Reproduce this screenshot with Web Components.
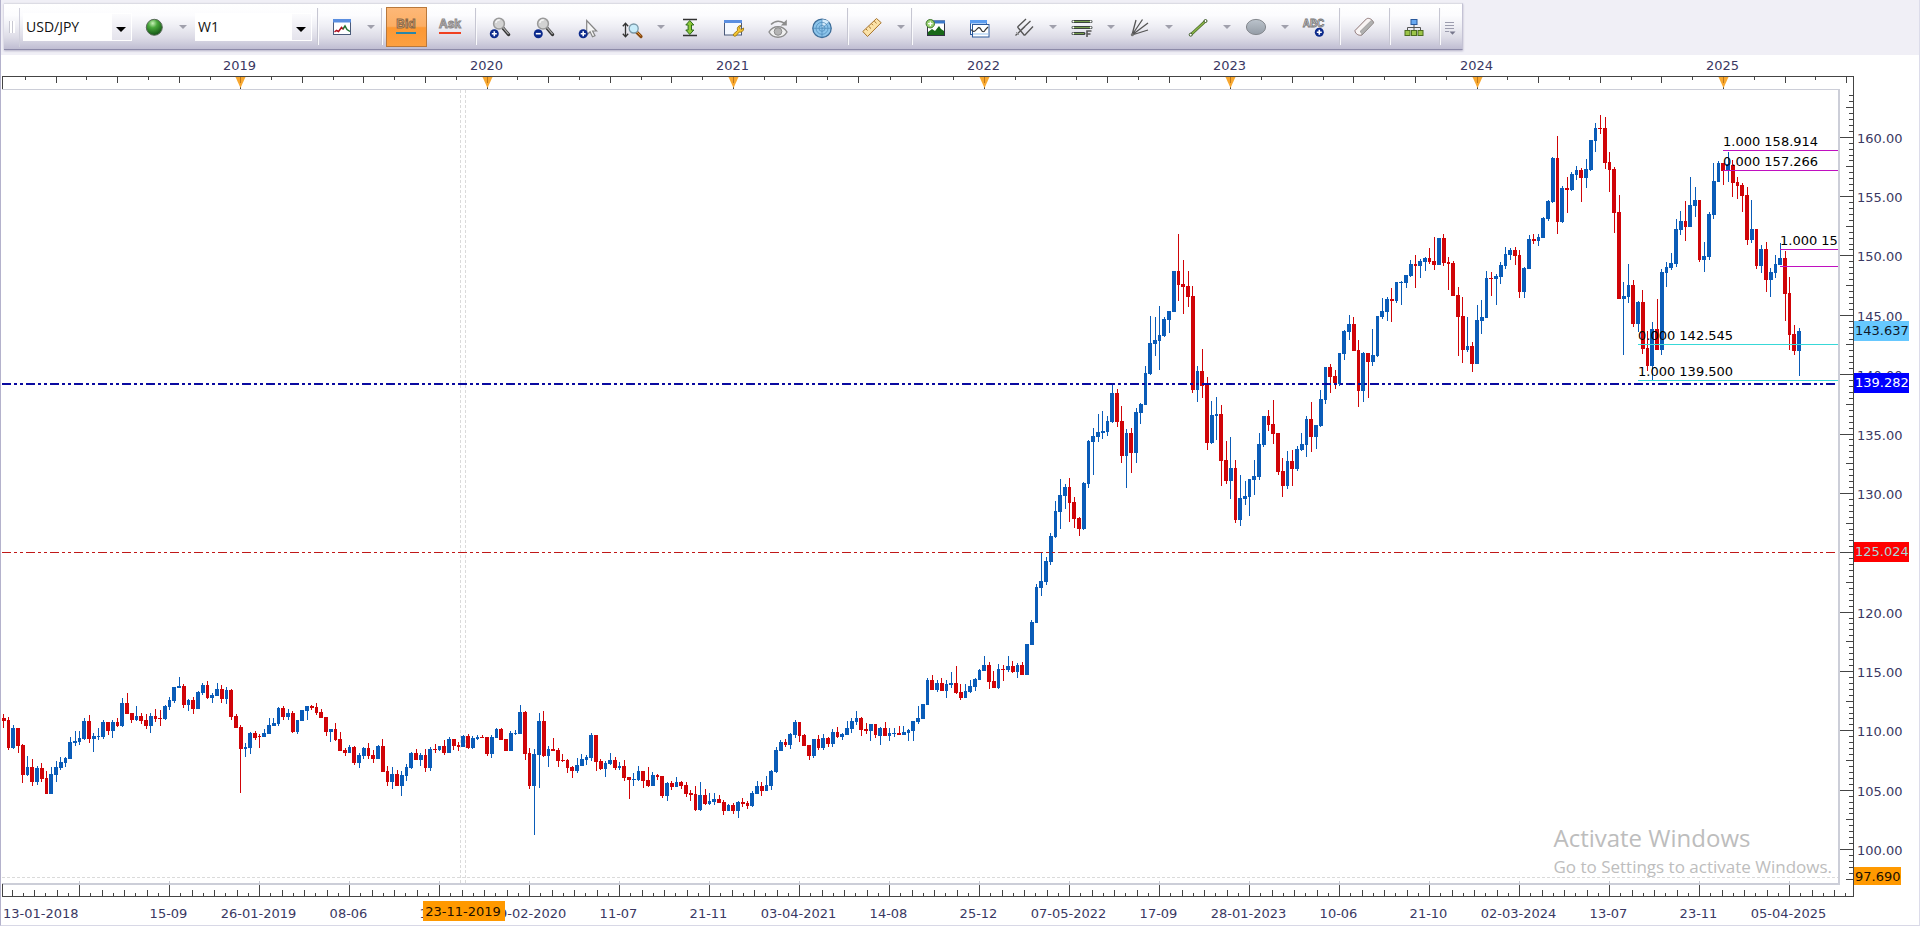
<!DOCTYPE html>
<html lang="en">
<head>
<meta charset="utf-8">
<title>USD/JPY W1</title>
<style>
	html, body {
		margin: 0;
		height: 100%;
	}
	body {
		font-family: "DejaVu Sans", Verdana, sans-serif;
		font-size: 13px;
		color: #3a3862;
		background: #fff;
	}
</style>
</head>
<body>
<trading-app>
	<tool-bar slot="toolbar">
		<tool-select label="Instrument" options="USD/JPY"></tool-select>
		<tool-button icon="orb" label="Connection" menu></tool-button>
		<tool-select label="Period" size="wider" options="W1"></tool-select>
		<tool-separator></tool-separator>
		<tool-button icon="chart" label="Chart type" menu></tool-button>
		<tool-separator></tool-separator>
		<price-side colour="#2a86a8" pressed>Bid</price-side>
		<price-side colour="#f04020">Ask</price-side>
		<tool-separator></tool-separator>
		<tool-button icon="zoomIn" label="Zoom in"></tool-button>
		<tool-button icon="zoomOut" label="Zoom out"></tool-button>
		<tool-button icon="pointer" label="Add pointer"></tool-button>
		<tool-button icon="zoomScale" label="Zoom scale" menu></tool-button>
		<tool-button icon="fit" label="Fit height"></tool-button>
		<tool-button icon="settings" label="Settings"></tool-button>
		<tool-button icon="eye" label="Show or hide"></tool-button>
		<tool-button icon="radar" label="Scan"></tool-button>
		<tool-separator></tool-separator>
		<tool-button icon="ruler" label="Measure" menu></tool-button>
		<tool-separator></tool-separator>
		<tool-button icon="indicator" label="Add indicator"></tool-button>
		<tool-button icon="windows" label="Chart windows"></tool-button>
		<tool-button icon="pitchfork" label="Pitchfork" menu></tool-button>
		<tool-button icon="levels" label="Fibonacci" menu></tool-button>
		<tool-button icon="fan" label="Fan" menu></tool-button>
		<tool-button icon="line" label="Line" menu></tool-button>
		<tool-button icon="ellipse" label="Shape" menu></tool-button>
		<tool-button icon="text" label="Add text"></tool-button>
		<tool-separator></tool-separator>
		<tool-button icon="eraser" label="Erase"></tool-button>
		<tool-separator></tool-separator>
		<tool-button icon="tree" label="Objects"></tool-button>
		<tool-separator></tool-separator>
		<tool-button icon="overflow" label="More" size="small"></tool-button>
	</tool-bar>
	<price-chart>
		<year-ruler slot="top"></year-ruler>
		<candle-plot slot="plot">
			<system-notice heading="Activate Windows">Go to Settings to activate Windows.</system-notice>
		</candle-plot>
		<price-ruler slot="right"></price-ruler>
		<date-ruler slot="bottom"></date-ruler>
	</price-chart>
</trading-app>

<script>
const BADGE = (x, y, minus) => `
	<circle cx="${x}" cy="${y}" r="4.5" fill="#0c2a8c"/>
	<path d="M${x - 2.5} ${y}h5${minus ? "" : `M${x} ${y - 2.5}v5`}" stroke="#fff" stroke-width="1.6"/>`;

const LENS = `
	<path d="M12.5 10.5l6 7" stroke="#333" stroke-width="3.4" stroke-linecap="round"/>
	<path d="M13 10.5l5.6 6.6" stroke="#aaa" stroke-width="1.2"/>
	<circle cx="9" cy="6.7" r="5.4" fill="#d2d2d2" stroke="#9a9a9a" stroke-width="1.5"/>
	<path d="M5.8 6a3.6 3.6 0 0 1 4-3" fill="none" stroke="#f4f4f4" stroke-width="1.4"/>`;

const ICONS = {
	orb: `
		<defs><radialGradient id="g" cx=".4" cy=".25" r=".8">
			<stop offset="0" stop-color="#c8f0b8"/><stop offset=".35" stop-color="#4aa83c"/><stop offset="1" stop-color="#0c4a10"/>
		</radialGradient></defs>
		<circle cx="10.3" cy="10.3" r="8" fill="url(#g)" stroke="#5a6a5a"/>`,
	chart: `
		<rect x="1.5" y="2.5" width="17" height="15" fill="#fff" stroke="#4a5a7a"/>
		<path d="M1 2h18v3.5H1z" fill="#5a8ee0"/>
		<path d="M2.5 15l2-1.5 2 1 3-4 2 2" fill="none" stroke="#b01020" stroke-width="1.5"/>
		<path d="M11 12l2-3 2 3.5 3 2" fill="none" stroke="#207030" stroke-width="1.5"/>`,
	zoomIn: LENS + BADGE(4.3, 16.7),
	zoomOut: LENS + BADGE(4.3, 16.7, true),
	pointer: `
		<path d="M8.7 3.5v14.5l3.4-3.200 2.4 5 2.500-1.100-2.400-4.700h4z" fill="#f6f6f6" stroke="#858585" stroke-width="1.200"/>
		${BADGE(5.2, 16.7)}`,
	zoomScale: `
		<path d="M3.5 6.5v13M.8 9.2l2.7-3 2.7 3M.8 16.8l2.7 3 2.7-3" fill="none" stroke="#333" stroke-width="1.3"/>
		<path d="M14.5 15l4.5 4.5" stroke="#8a4a10" stroke-width="3.2" stroke-linecap="round"/>
		<path d="M15 15l3.6 3.6" stroke="#e8a040"/>
		<circle cx="11.7" cy="11.5" r="4.5" fill="#c8ecfa" stroke="#7a98a8" stroke-width="1.3"/>`,
	fit: `
		<path d="M3 2.5h14M3 18.5h14" stroke="#333" stroke-width="1.5"/>
		<path d="M9.8 3.5l4 4.5h-2.3v5h2.3l-4 4.5-4-4.5h2.3V8H5.8z" fill="#8cc838" stroke="#2c6a18"/>`,
	settings: `
		<rect x=".5" y="3.5" width="17" height="14.5" fill="#f4f8ff" stroke="#4a5a7a"/>
		<path d="M0 3h18v3H0z" fill="#5a8ee0"/>
		<path d="M9.5 17l4-3.500c-.8-3 1-5.200 3.500-5l-1.500 2.500 1.500 1.500 2.500-1.500c.6 2.800-2 4.800-4.200 4l-3.500 4c-1.500.8-3-.3-2.300-2z" fill="#f4c430" stroke="#9a7410" stroke-width=".9"/>`,
	eye: `
		<path d="M1 15c4-7 14-7 18 0-4 7-14 7-18 0z" fill="#f0f0f0" stroke="#8c8c8c" stroke-width="1.4"/>
		<circle cx="10" cy="14.5" r="3.8" fill="#b4b4b4" stroke="#8c8c8c"/>
		<path d="M3 7.500c4-4 9-4 13.500-1.200" fill="none" stroke="#8c8c8c" stroke-width="1.6"/>
		<path d="M18.8 2.5v6h-6z" fill="#8c8c8c"/>`,
	radar: `
		<circle cx="10" cy="11.3" r="9.2" fill="#8cc4ea" stroke="#3c6c98" stroke-width="1.3"/>
		<path d="M10 11.3L17.5 5A9 9 0 0 0 10 2.500z" fill="#d4ecfc"/>
		<g fill="none" stroke="#4c88b8" stroke-width=".7">
			<circle cx="10" cy="11.3" r="6"/><circle cx="10" cy="11.3" r="3"/>
			<path d="M10 2v18.5M1 11.3h18M10 11.3L17 5"/>
		</g>`,
	ruler: `
		<path d="M.8 14.5L14.5 1.500l4.700 4.200L5.500 19.500z" fill="#fbe2a8" stroke="#a8742c"/>
		<path d="M4 12l1.500 1.500M6.700 9.300l2.300 2.300M9.500 6.700L11 8.200M12.200 4l2.300 2.300" stroke="#a8742c"/>`,
	indicator: `
		<rect x="1.5" y="4" width="17" height="14.5" fill="#fff" stroke="#334"/>
		<path d="M1 3.5h18v3H1z" fill="#3c78c8"/>
		<path d="M2 18v-3l4-3 3 2 4-5 2 3 3 2v4z" fill="#186818"/>
		<circle cx="4.3" cy="6.7" r="4.2" fill="#98d070" stroke="#407830"/>
		<path d="M2 6.7h4.6M4.3 4.4V9" stroke="#fff" stroke-width="1.3"/>`,
	windows: `
		<rect x=".5" y="3.5" width="16" height="14" fill="#fff" stroke="#2c5a9c"/>
		<path d="M0 3h17v3.5H0z" fill="#5a9cf0"/>
		<rect x="2.5" y="7.5" width="16.500" height="12.500" fill="#fff" stroke="#2c5a9c"/>
		<path d="M1 12.500c2 3 4 2 5.500 0s3-3 4.500 0 3 3 4.500 0l2.500-2.500" fill="none" stroke="#333" stroke-width="1.2"/>
		<path d="M3 17h15.500" stroke="#9ac4f0"/>`,
	pitchfork: `
		<path d="M1.5 18.5L11 9.500M3.500 10l8.500-8M3.500 10l7 8.500M7 13l9.500-9M10.500 18.500L19 9.500" fill="none" stroke="#555" stroke-width="1.3"/>
		<path d="M2 15l3 3" stroke="#999"/>`,
	levels: `
		<path d="M1 4.500h18M1 10.500h18M1 16.500h11" stroke="#3c4440" stroke-width="3" stroke-linecap="round"/>
		<path d="M2 4.500h16M2 10.500h16M2 16.500h10" stroke="#78a050"/>
		<g fill="#fff"><circle cx="1.300" cy="4.500" r=".9"/><circle cx="18.700" cy="4.500" r=".9"/><circle cx="1.300" cy="10.500" r=".9"/><circle cx="18.700" cy="10.500" r=".9"/><circle cx="1.300" cy="16.500" r=".9"/></g>
		<path d="M15 20v-6h4.500M15 17h3.500" fill="none" stroke="#555" stroke-width="1.600"/>`,
	fan: `
		<path d="M2 18L6 3M2 18L12.500 2.500M2 18L18 6M2 18l16-5" fill="none" stroke="#555" stroke-width="1.3"/>
		<circle cx="2.3" cy="17.7" r="1.5" fill="#777"/>`,
	line: `
		<path d="M3 17.5L17.500 4" stroke="#4c6a2c" stroke-width="3"/>
		<path d="M3 17.5L17.500 4" stroke="#8cb848" stroke-width="1.4"/>
		<circle cx="2.7" cy="17.7" r="1.5" fill="#fff" stroke="#3c5a24"/><circle cx="17.500" cy="4" r="1.500" fill="#fff" stroke="#3c5a24"/>`,
	ellipse: `
		<defs><linearGradient id="g" x2="0" y2="1"><stop offset="0" stop-color="#bcc4cc"/><stop offset="1" stop-color="#949ca6"/></linearGradient></defs>
		<ellipse cx="10" cy="10" rx="9.6" ry="7.600" fill="url(#g)" stroke="#84888e"/>`,
	text: `
		<text x="9.5" y="9.500" text-anchor="middle" font-family="Liberation Sans, Arial, sans-serif" font-size="10" font-weight="bold" fill="#e4e4ea" stroke="#777" stroke-width=".8">ABC</text>
		${BADGE(15.3, 15.3)}`,
	eraser: `
		<path d="M1 13.500L12.500 1.800c2.500-1.500 6.500 1 7 4L8 18c-3 1-7-1-7-4.500z" fill="#f8f4f4" stroke="#8c7474"/>
		<path d="M8 18c0-1.500-.7-2.500-2-3.500L17.500 3.200c1.500 1 2 2 2 2.800z" fill="#b0b0b0" stroke="#888" stroke-width=".6"/>`,
	tree: `
		<path d="M10 7v6M3.500 14v-3.500h13V14" fill="none" stroke="#555"/>
		<rect x="7" y="2.500" width="6" height="5" fill="#68a8f0" stroke="#28589c"/>
		<g fill="#9cc448" stroke="#4c6c20"><rect x="1" y="13.500" width="5" height="5"/><rect x="7.500" y="13.500" width="5" height="5"/><rect x="14" y="13.500" width="5" height="5"/></g>`,
	overflow: `
		<path d="M5 5.500h9M5 8.500h9M5 11.500h9M5 14.500h4" stroke="#9c9cae"/>
		<path d="M9.500 14.500h6l-3 3.200z" fill="#77778c"/>`
};

// page frame: the tool strip on top, the chart takes what is left
class TradingApp extends HTMLElement {
	constructor() {
		super();
		this.attachShadow({mode: "open"}).innerHTML = `
			<style>
				:host {
					display: flex;
					flex-direction: column;
					box-sizing: border-box;
					height: calc(100vh - 1px);
					border-left: 1px solid #b4b2cc;
					border-right: 1px solid #dcdcea;
					border-bottom: 1px solid #d8d8e6;
				}
				header {
					background: #f0eff6;
					padding: 3px 3px 5px;
				}
				::slotted(price-chart) { flex: 1; }
			</style>
			<header><slot name="toolbar"></slot></header>
			<slot></slot>
		`;
	}
}

class ToolBar extends HTMLElement {
	constructor() {
		super();
		this.attachShadow({mode: "open"}).innerHTML = `
			<style>
				:host {
					display: inline-flex;
					vertical-align: top;
					align-items: center;
					box-sizing: border-box;
					height: 47px;
					border-top: 1px solid #dcdce4;
					border-bottom: 1px solid #8c8aa8;
					border-right: 1px solid #c4c2d4;
					background: linear-gradient(#fff 0, #fcfcfe 25%, #eeeef4 50%, #dcdbe6 75%, #bfbdd2 100%);
					box-shadow: 0 1px 2px #b4b2c8;
				}
				.grip {
					width: 6px;
					height: 12px;
					margin: 0 3px 0 5px;
					background: repeating-linear-gradient(90deg, #c8c8d2 0 1px, #fff 1px 3px);
				}
				.edge {
					align-self: stretch;
					margin: 4px 3px 2px 1px;
					border-left: 1px solid #d0d0dc;
				}
			</style>
			<span class="grip"></span>
			<span class="edge"></span>
			<slot></slot>
		`;
	}
}

class ToolSeparator extends HTMLElement {
	constructor() {
		super();
		this.attachShadow({mode: "open"}).innerHTML = `
			<style>
				:host {
					align-self: stretch;
					box-sizing: border-box;
					width: 2px;
					margin: 4px 1px 4px 3px;
					border-left: 1px solid #c6c6d2;
					border-right: 1px solid #fafafc;
				}
			</style>
		`;
	}
}

class ToolSelect extends HTMLElement {
	connectedCallback() {
		let options = this.getAttribute("options").split(",");
		this.attachShadow({mode: "open"}).innerHTML = `
			<style>
				:host {
					display: block;
					position: relative;
					width: 109px;
				}
				:host([size="wider"]) {
					width: 117px;
					margin: 0 2px 0 5px;
				}
				select {
					appearance: none;
					display: block;
					width: 100%;
					height: 28px;
					padding: 0 20px 0 3px;
					border: 0;
					font: 14px "Open Sans", "Noto Sans", sans-serif;
					color: #111;
					background: linear-gradient(#fbfbfd, #e4e3ec) right 1px top 1px / 19px 26px no-repeat, #fff;
				}
				:host::after {
					content: "";
					position: absolute;
					right: 6px;
					top: 14px;
					border: 5px solid transparent;
					border-top-color: #000;
					border-bottom: 0;
					pointer-events: none;
				}
			</style>
			<select aria-label="${this.getAttribute("label")}">
				${options.map(option => `<option>${option}</option>`).join("")}
			</select>
		`;
	}
}

class ToolButton extends HTMLElement {
	connectedCallback() {
		let label = this.getAttribute("label");
		let menu = this.hasAttribute("menu") ? `<button class="menu" aria-label="${label} menu"></button>` : "";
		this.attachShadow({mode: "open"}).innerHTML = `
			<style>
				:host { display: flex; }
				button {
					display: flex;
					align-items: center;
					justify-content: center;
					width: 44px;
					height: 38px;
					padding: 0;
					border: 0;
					background: none;
				}
				:host([size="small"]) button { width: 20px; }
				:host([size="small"]) svg { flex-shrink: 0; margin-right: 4px; }
				button:hover { background: #fff8; }
				svg { overflow: visible; }
				.menu { width: 14px; }
				.menu::after {
					content: "";
					border: 4px solid transparent;
					border-top-color: #a0a0ac;
					border-bottom: 0;
				}
			</style>
			<button aria-label="${label}"><svg width="20" height="20" viewBox="0 0 20 20">${ICONS[this.getAttribute("icon")]}</svg></button>${menu}
		`;
	}
}

// Bid / Ask toggle
class PriceSide extends HTMLElement {
	connectedCallback() {
		let pressed = this.hasAttribute("pressed");
		this.attachShadow({mode: "open"}).innerHTML = `
			<style>
				:host {
					display: block;
					width: 44px;
				}
				button {
					display: flex;
					align-items: center;
					justify-content: center;
					width: 41px;
					height: 40px;
					margin: 0 auto;
					padding: 0 0 2px;
					border: 1px solid transparent;
					background: none;
				}
				button[aria-pressed="true"] {
					border-color: #b8783c;
					background: linear-gradient(#fdb878 0, #fcae64 48%, #fc9834 52%, #fda040 100%);
				}
				span {
					font: bold 12px/15px "Liberation Sans", Arial, sans-serif;
					color: #dcdce2;
					-webkit-text-stroke: 1px #8c8888;
					border-bottom: 2px solid ${this.getAttribute("colour")};
				}
				[aria-pressed="true"] span {
					color: #f0b880;
					-webkit-text-stroke-color: #8a6848;
				}
			</style>
			<button aria-pressed="${pressed}"><span><slot></slot></span></button>
		`;
	}
}

class PriceChart extends HTMLElement {
	constructor() {
		super();
		this.attachShadow({mode: "open"}).innerHTML = `
			<style>
				:host {
					display: grid;
					grid-template: 34px minmax(0, 1fr) 40px / minmax(0, 1fr) 79px;
					min-height: 0;
					padding-left: 1px;
				}
				slot[name="top"]::slotted(*), slot[name="bottom"]::slotted(*) { grid-column: 1 / 3; }
			</style>
			<slot name="top"></slot>
			<slot name="plot"></slot>
			<slot name="right"></slot>
			<slot name="bottom"></slot>
		`;
	}
}

// Weekly candles, first week 13-01-2018. u/d = up or down, then high, body top,
// body bottom and low. Levels count down from TOP_PRICE, LEVELS_PER_YEN to one yen.
const CANDLES = `
d714 718 721 728,d717 720 748 750,u725 728 748 749,d728 728 746 753,d744 745 775 783,u756 767 775 776,d759 767 782 786,u766 768 782 785,d763 768 779 782,d771 778 794 794,
u767 774 794 794,u761 767 775 782,u757 762 768 770,u757 758 763 767,u737 742 759 759,u731 741 743 746,u731 738 742 745,u718 721 739 740,d715 721 739 743,u733 736 739 752,
u728 736 737 740,u720 722 737 739,d722 722 731 735,u720 722 731 738,d718 722 726 727,u698 703 726 727,d693 703 714 714,d713 713 720 723,u706 716 720 721,d713 716 721 724,
d714 720 726 729,u713 716 726 733,d709 716 719 722,d710 718 719 726,u705 706 719 720,u697 700 707 710,u687 687 701 703,u677 686 688 688,d684 686 705 708,u699 700 705 711,
d697 700 709 714,u691 692 709 709,u683 685 693 695,d681 685 698 699,u693 695 698 703,u683 689 696 696,d685 689 699 703,u687 690 699 704,d689 690 717 720,d714 716 728 728,
d725 727 749 793,u743 747 749 757,u732 733 748 754,d731 733 738 740,d734 736 737 748,u729 733 737 737,u718 725 734 734,u718 723 726 726,u707 708 724 726,d706 708 717 720,
u709 713 717 720,d711 713 732 733,u720 720 732 734,u710 710 721 721,u706 706 711 720,d705 706 708 710,d703 707 713 715,d709 712 718 718,d717 717 732 736,u729 729 732 742,
d723 729 740 741,d732 739 751 751,d748 750 753 756,u745 747 753 753,d746 747 763 765,u753 755 763 768,u747 748 756 759,d743 748 756 759,d750 755 759 763,u745 746 759 759,
d739 746 772 772,d766 771 782 786,u767 774 782 789,d770 774 786 786,u771 775 786 796,u764 767 776 781,u752 753 768 769,d749 753 760 760,u753 755 760 766,d749 755 768 772,
u747 749 768 771,d744 749 750 753,u746 746 750 751,d740 746 753 755,u737 739 753 753,d739 739 746 750,d742 745 747 751,u735 736 747 747,d734 736 748 749,u736 738 748 749,
u735 737 739 740,d735 737 738 738,d737 737 754 756,u735 737 754 758,u728 729 738 738,d728 729 740 740,d739 739 751 751,u731 733 751 751,u730 733 734 735,u705 712 734 734,
d711 712 754 760,d748 753 786 789,u749 754 786 835,u713 721 755 788,d711 721 756 757,u746 749 756 767,d738 749 751 751,d748 750 761 767,d754 760 761 762,d759 760 768 773,
d766 767 771 778,u758 765 771 773,u754 759 766 766,u755 757 760 765,u733 735 758 761,d735 735 762 771,d759 761 769 770,u761 763 769 777,u753 760 764 765,d757 760 768 770,
u762 766 768 770,d760 766 778 781,d777 777 780 799,u773 779 780 786,u766 771 780 781,d771 771 781 788,d767 780 786 787,u772 775 786 786,d774 775 777 780,d776 776 796 798,
u782 783 796 801,d781 783 787 790,u777 782 787 787,d781 782 786 789,d782 785 794 797,d790 793 795 801,d786 794 810 811,u782 795 810 811,d789 795 804 805,u793 801 804 805,
u793 799 802 805,d795 799 803 803,d800 802 811 815,u804 805 811 811,d803 805 811 814,u801 802 811 818,d798 802 804 807,d801 803 806 809,u791 793 806 807,u781 786 794 794,
d782 786 791 796,u776 785 791 791,u770 771 786 790,u747 750 772 773,u740 742 751 751,d739 742 745 747,u733 734 745 749,u720 722 735 738,d722 722 736 742,d734 735 746 746,
d745 745 756 760,u739 739 756 758,d735 739 748 750,u734 738 748 750,d737 738 744 747,u729 732 744 747,d727 732 737 738,u733 734 737 740,u721 728 735 735,u718 721 729 733,
u711 718 722 725,d717 718 730 736,d723 729 731 734,u724 724 731 741,d724 724 735 738,u727 728 736 745,d722 728 736 736,u728 733 736 741,u728 733 734 737,d726 733 735 735,
u726 732 735 735,u729 730 733 741,u721 721 731 741,u706 718 722 724,u704 704 719 719,u678 680 705 705,d675 680 690 690,u680 683 690 692,d678 683 691 691,u680 684 691 698,
u672 683 685 688,d666 683 693 694,d684 692 698 700,u684 691 698 698,u680 686 692 693,u678 679 687 691,u669 670 680 680,u656 665 671 671,d662 665 682 689,d671 681 688 688,
u664 669 688 689,d665 669 670 681,u656 666 670 672,d661 666 672 673,u663 665 672 678,d662 665 675 675,u644 644 675 675,u620 622 645 645,u584 587 623 623,u553 581 588 596,
u557 561 582 585,u533 536 562 565,u501 511 537 538,u479 495 512 529,u484 487 496 509,d478 487 503 522,d497 502 519 528,d517 518 529 536,u482 483 529 530,u440 441 484 488,
u428 436 442 475,u414 432 437 442,u411 431 433 439,u416 421 432 436,u384 393 422 423,d389 393 422 427,d406 421 456 463,u429 433 456 488,d428 433 453 473,u408 412 453 463,
u403 404 413 424,u366 373 405 405,u316 343 374 375,u317 340 344 356,u306 335 341 370,u317 319 336 337,u311 311 320 333,u271 271 312 312,d234 271 285 301,d260 284 287 314,
d271 286 297 307,d286 296 390 393,u366 371 390 402,d349 371 386 398,d377 384 443 450,u401 415 443 444,u397 414 416 440,d405 414 461 486,d441 460 481 484,u437 468 481 499,
d460 468 520 523,u475 498 520 526,u481 496 499 505,u479 479 497 516,u460 476 480 495,u433 444 477 480,u416 416 445 447,d410 416 425 431,d400 424 434 444,d433 433 472 475,
d458 471 486 497,u451 461 486 489,d450 461 469 486,u446 449 469 471,u433 444 450 451,u416 419 445 457,d402 419 437 452,u425 425 437 449,u390 399 426 427,u367 367 400 404,
d364 367 377 393,d370 376 383 389,u353 353 384 386,u330 331 354 360,u315 324 332 340,d317 324 351 351,d340 350 391 407,u352 353 391 402,d353 353 362 398,u329 355 362 366,
u316 316 356 357,u298 311 317 319,u297 299 312 321,d288 299 301 322,u282 282 301 303,u281 282 283 305,u275 275 283 288,u260 264 276 277,d255 264 266 288,u259 261 266 278,
u257 258 262 271,d248 258 262 264,d237 261 265 270,u238 238 265 265,d234 238 263 266,d257 262 264 290,d261 263 296 296,d287 295 317 356,d297 316 350 363,u317 346 350 352,
d342 346 364 372,u305 320 364 364,u300 317 321 334,u271 278 318 318,d272 278 279 296,u274 276 279 305,u262 265 277 284,u247 254 266 269,u248 250 255 260,d247 250 256 265,
d250 255 292 298,u267 268 292 298,u235 239 269 269,d234 239 241 244,u234 237 241 246,u217 218 238 238,u200 201 219 221,u157 158 202 203,d136 158 222 234,u186 188 222 223,
d177 188 190 213,u172 174 190 191,u166 170 175 180,d168 170 178 202,u159 169 178 188,u140 140 170 171,u123 128 141 152,d115 128 129 134,d117 128 163 169,d152 162 170 192,
d167 169 213 233,d195 212 299 299,u282 296 299 355,u264 285 297 303,d280 285 324 327,u301 302 324 332,d290 302 349 354,d331 348 366 371,u322 329 366 380,d299 329 350 350,
u269 272 350 355,u262 267 273 287,u253 263 268 270,u219 229 264 267,u211 221 230 235,d201 221 227 241,u177 205 227 227,u187 200 206 217,d200 200 260 262,u242 256 260 272,
u212 214 257 260,u163 181 215 219,u161 163 182 182,d163 163 171 185,u152 164 171 182,d160 165 183 197,d177 182 186 199,d183 185 196 212,d187 195 240 245,u200 229 240 243,
d229 229 266 269,u245 249 266 273,d242 249 280 292,u268 272 280 297,u255 264 273 278,u243 258 265 265,d251 258 294 321,d277 293 335 350,d325 334 351 355,u328 331 351 376
`.trim().split(",").map(row => {
	row = row.trim();
	let [high, top, bottom, low] = row.slice(1).split(" ").map(Number);
	return {up: row[0] === "u", high, top, bottom, low};
});

const TOP_PRICE = 171.556;
const LEVELS_PER_YEN = 11.873;
const FIRST_LEVEL = 90;
const LEVELS = 793;
const WEEKS = 387.6; // weeks across the plot
const FIRST_WEEK = Date.UTC(2018, 0, 13);
const YEARS = {2019: 50, 2020: 102, 2021: 154, 2022: 207, 2023: 259, 2024: 311, 2025: 363};
const CURSOR = {week: 97, price: 97.690};
const TAGS = [
	{price: 143.637, fill: "#66c8ff", colour: "#101828"},
	{price: 139.282, fill: "#00f", colour: "#fff"},
	{price: 125.024, fill: "#f00", colour: "#a8d8d8"},
	{price: CURSOR.price, fill: "#f90", colour: "#201000"}
];

// shared scales and redrawing for the four parts of the chart
class ChartPart extends HTMLElement {
	constructor() {
		super();
		this.shadow = this.attachShadow({mode: "open"});
		this.shadow.innerHTML = `
			<style>
				:host { display: block; position: relative; min-width: 0; min-height: 0; }
				svg { position: absolute; width: 100%; height: 100%; overflow: visible; }
				text { fill: #3a3862; font-size: 13px; }
				.axis { fill: none; stroke: #444; shape-rendering: crispEdges; }
				.faint { fill: none; stroke: #c4c6d0; shape-rendering: crispEdges; }
				${this.styles}
			</style>
			<svg></svg>
			<slot></slot>
		`;
	}

	connectedCallback() {
		new ResizeObserver(() => {
			this.shadow.querySelector("svg").innerHTML = this.draw(this.clientWidth, this.clientHeight);
		}).observe(this);
	}

	get styles() { return ""; }

	weekX(week, plotWidth) {
		return 1.45 + week * plotWidth / WEEKS;
	}

	levelY(level, plotHeight) {
		return (level - FIRST_LEVEL) * plotHeight / LEVELS;
	}

	priceY(price, plotHeight) {
		return Math.floor(this.levelY((TOP_PRICE - price) * LEVELS_PER_YEN, plotHeight));
	}
}

class YearRuler extends ChartPart {
	draw(width) {
		let end = width - 65.5;
		let ticks = "", marks = "";
		let starts = [-2, ...Object.values(YEARS), 415];
		starts.slice(0, -1).forEach((start, n) => {
			for (let eighth = 1; eighth < 8; eighth++) {
				let week = start + (starts[n + 1] - start) * eighth / 8;
				let x = Math.round(this.weekX(week, width - 81)) + .5;
				if (x < end) ticks += `M${x} 22v${eighth % 2 ? 3 : 6}`;
			}
		});
		for (let year in YEARS) {
			let x = Math.round(this.weekX(YEARS[year], width - 81)) + .5;
			marks += `
				<path d="M${x} 28v7" class="axis"/>
				<path d="M${x - 5} 22h10l-5 11z" fill="#f8a830"/>
				<path d="M${x} 22v6" stroke="#c07818"/>
				<text x="${x - 1}" y="15" text-anchor="middle">${year}</text>`;
		}
		return `<path class="axis" d="M.5 34V21.5H${end}V34${ticks}"/>${marks}`;
	}
}

class DateRuler extends ChartPart {
	label(week) {
		let [year, month, day] = new Date(FIRST_WEEK + week * 7 * 864e5).toISOString().slice(0, 10).split("-");
		return {short: `${day}-${month}`, full: `${day}-${month}-${year}`, year};
	}

	draw(width) {
		let end = width - 65.5;
		let ticks = "", faint = "";
		let labels = `<text x="1" y="33">${this.label(0).full}</text>`;
		let lastYear = "2018";
		for (let week = 16; week < CANDLES.length; week += 19) {
			let x = Math.round(this.weekX(week, width - 81)) + .5;
			ticks += `M${x} 0v11`;
			faint += `M${x} -4v3`;
			if (week === 16) continue; // too close to the first label
			let label = this.label(week);
			labels += `<text x="${x - 1}" y="33" text-anchor="middle">${label.year === lastYear ? label.short : label.full}</text>`;
			lastYear = label.year;
		}
		for (let n = -6; n < 160; n++) {
			let x = Math.round(this.weekX(16 + n * 19 / 8, width - 81)) + .5;
			if (n % 8 && x < end) ticks += `M${x} 11v${n % 2 ? -3 : -6}`;
		}
		let cursor = Math.round(this.weekX(CURSOR.week, width - 81));
		return `
			<path class="faint" d="${faint}"/>
			<path class="axis" d="M.5 -1V11.5H${end}V-1${ticks}"/>
			${labels}
			<rect x="${cursor - 40}" y="16" width="82" height="20" fill="#f90"/>
			<text x="${cursor}" y="31" text-anchor="middle" style="fill: #201000">${this.label(CURSOR.week).full}</text>`;
	}
}

class PriceRuler extends ChartPart {
	draw(width, height) {
		let plotHeight = height - 3;
		let ticks = "", labels = "";
		for (let n = 195; n <= 327; n++) {
			let price = n / 2;
			let y = this.priceY(price, plotHeight) + 1.5;
			let length = n % 10 === 0 ? 13 : n % 5 === 0 ? 7 : 4;
			ticks += `M13 ${y}h-${length}`;
			// a tag right on top of a label replaces it
			let covered = TAGS.some(tag => Math.abs(tag.price - price) < .3);
			if (n % 10 === 0 && !covered) labels += `<text x="17" y="${y + 5}">${price.toFixed(2)}</text>`;
		}
		return `
			<path class="axis" d="M13.5 0V${height}${ticks}"/>
			${labels}
			${TAGS.map(tag => this.tag(tag, plotHeight)).join("")}`;
	}

	tag({price, fill, colour}, plotHeight) {
		let y = this.priceY(price, plotHeight) + 1;
		let text = price.toFixed(3);
		return `
			<rect x="14" y="${y - 10}" width="${text.length > 6 ? 55 : 47}" height="${text.length > 6 ? 20 : 18}" fill="${fill}"/>
			<text x="15" y="${y + 4}" style="fill: ${colour}">${text}</text>`;
	}
}

class CandlePlot extends ChartPart {
	get styles() {
		return `
			:host {
				border: solid #ccced8;
				border-width: 1px 2px 2px 0;
			}
			svg { overflow: hidden; }
			svg * { shape-rendering: crispEdges; }
			text { fill: #000; }
			.up { fill: #0a5cb8; }
			.down { fill: #d00408; }
			.cursor { stroke: #dadada; stroke-dasharray: 3 2; fill: none; }
			slot { display: block; position: absolute; right: 6px; bottom: 4px; }
		`;
	}

	draw(width, height) {
		let cursorX = Math.round(this.weekX(CURSOR.week, width));
		let cursorY = this.priceY(CURSOR.price, height) + .5;
		return `
			<path class="cursor" d="M${cursorX - 2.5} 0V${height}M${cursorX + 2.5} 0V${height}M0 ${cursorY}H${width}"/>
			${CANDLES.map((candle, n) => this.candle(candle, n, width, height)).join("")}
			${this.level(384, "#0a0aa0", 2, width, height)}
			${this.level(552.5, "#c01818", 1, width, height)}
			${this.fib(363, 150, "#c010c0", "1.000 158.914", width, height)}
			${this.fib(363, 170, "#c010c0", "0.000 157.266", width, height)}
			${this.fib(375, 249, "#c010c0", "1.000 15", width, height)}
			${this.fib(375, 266, "#c010c0", "", width, height)}
			${this.fib(345, 344, "#38d8d8", "0.000 142.545", width, height)}
			${this.fib(345, 380, "#38d8d8", "1.000 139.500", width, height)}`;
	}

	candle(candle, n, width, height) {
		let left = Math.floor(this.weekX(n, width)) - 1;
		let next = Math.floor(this.weekX(n + 1, width)) - 1;
		let centre = Math.round(this.weekX(n, width));
		let [high, top, bottom, low] = [candle.high, candle.top, candle.bottom, candle.low]
			.map(level => Math.round(this.levelY(level, height)));
		return `<path class="${candle.up ? "up" : "down"}" d="M${centre} ${high}h1V${low}h-1zM${left} ${top}H${next - 1}V${Math.max(bottom, top + 1)}H${left}z"/>`;
	}

	// long dash, two dots
	level(level, colour, thickness, width, height) {
		let y = this.levelY(level, height);
		return `<path d="M0 ${y}H${width - 3}" stroke="${colour}" stroke-width="${thickness}" stroke-dasharray="9 3 3 3 3 3"/>`;
	}

	fib(week, level, colour, text, width, height) {
		let x = Math.round(this.weekX(week, width));
		let y = Math.round(this.levelY(level, height)) + .5;
		return `<path d="M${x} ${y}H${width}" stroke="${colour}"/><text x="${x}" y="${y - 4.5}">${text}</text>`;
	}
}

class SystemNotice extends HTMLElement {
	connectedCallback() {
		this.attachShadow({mode: "open"}).innerHTML = `
			<style>
				:host {
					display: block;
					font: 17px/24px "Open Sans", "Noto Sans", sans-serif;
					color: #bdbdbd;
				}
				strong {
					display: block;
					font-size: 24px;
					font-weight: 400;
					line-height: 34px;
				}
			</style>
			<strong>${this.getAttribute("heading")}</strong>
			<slot></slot>
		`;
	}
}

customElements.define("trading-app", TradingApp);
customElements.define("tool-bar", ToolBar);
customElements.define("tool-separator", ToolSeparator);
customElements.define("tool-select", ToolSelect);
customElements.define("tool-button", ToolButton);
customElements.define("price-side", PriceSide);
customElements.define("price-chart", PriceChart);
customElements.define("year-ruler", YearRuler);
customElements.define("date-ruler", DateRuler);
customElements.define("price-ruler", PriceRuler);
customElements.define("candle-plot", CandlePlot);
customElements.define("system-notice", SystemNotice);
</script>
</body>
</html>
